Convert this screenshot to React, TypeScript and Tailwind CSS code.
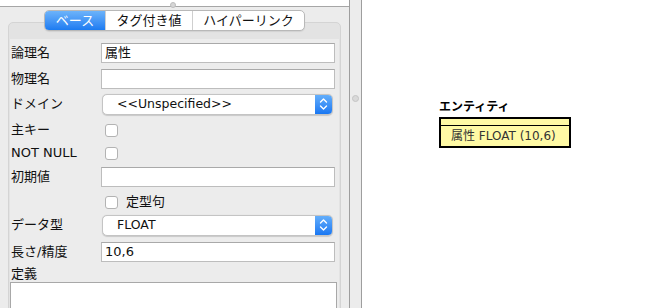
import React from "react";

const font = "font-['DejaVu_Sans','Noto_Sans_CJK_JP',sans-serif]";

function Stepper() {
  return (
    <div className="flex h-full w-[17px] items-center justify-center rounded-r-[4px] bg-gradient-to-b from-[#63aefb] to-[#1877f2]">
      <svg width="9" height="14" viewBox="0 0 9 14" fill="none">
        <path d="M1.5 5 L4.5 2 L7.5 5" stroke="white" strokeWidth="1.4" strokeLinecap="round" strokeLinejoin="round" />
        <path d="M1.5 9 L4.5 12 L7.5 9" stroke="white" strokeWidth="1.4" strokeLinecap="round" strokeLinejoin="round" />
      </svg>
    </div>
  );
}

function Select({ value }: { value: string }) {
  return (
    <div className="ml-[1px] flex h-[21px] w-[231px] items-center rounded-[5px] border border-[#c4c4c4] bg-white shadow-[0_0.5px_1px_rgba(0,0,0,0.15)]">
      <span className="flex-1 pl-[14px] text-[12.5px] text-[#111]">{value}</span>
      <Stepper />
    </div>
  );
}

function Input({ value = "" }: { value?: string }) {
  return (
    <div className="flex h-[20px] w-[234px] items-center border border-[#bdbdbd] border-t-[#a9a9a9] bg-white pl-[3px] text-[13px] text-[#111]">
      {value}
    </div>
  );
}

function Check() {
  return <div className="ml-[4px] h-[13px] w-[13px] rounded-[3px] border border-[#b3b3b3] bg-white" />;
}

function Row({ label, mt, children }: { label?: string; mt: string; children?: React.ReactNode }) {
  return (
    <div className={`flex h-[20px] items-center ${mt}`}>
      <div className="w-[91px] pl-[1px] text-[13px] text-[#111]">{label}</div>
      {children}
    </div>
  );
}

export default function App() {
  const tabs = ["ベース", "タグ付き値", "ハイパーリンク"];
  const widths = ["w-[60px]", "w-[87px]", "w-[112px]"];

  return (
    <div className={`flex h-[308px] w-[667px] overflow-hidden bg-white ${font}`}>
      {/* property panel */}
      <div className="relative flex w-[350px] flex-col border-r border-[#9e9e9e] bg-[#ececec]">
        <div className="h-[7px] shrink-0 border-b border-[#a6a6a6] bg-white" />
        <div className="absolute left-[170px] top-[2px] h-[6px] w-[6px] rounded-full border border-[#bdbdbd] bg-[#d6d6d6]" />

        <div className="flex flex-col px-[8px] pt-[3px]">
          <div className="relative z-10 -mb-[9px] flex justify-center">
            <div className="flex h-[21px] overflow-hidden rounded-[5px] border border-[#b8b8b8] bg-white text-[13px] shadow-[0_1px_1px_rgba(0,0,0,0.08)]">
              {tabs.map((t, i) => (
                <div
                  key={t}
                  className={`flex items-center justify-center ${widths[i]} ${
                    i === 0
                      ? "bg-gradient-to-b from-[#6cb3fa] to-[#1b7bf1] text-white"
                      : "border-l border-[#cfcfcf] text-[#111]"
                  }`}
                >
                  {t}
                </div>
              ))}
            </div>
          </div>

          <div className="h-[300px] rounded-[5px] border border-[#d4d4d4] bg-[#e3e3e3] px-[1px] pt-[16px]">
            <div className="h-full bg-[#ececec] pt-[4px]">
              <Row label="論理名" mt="mt-0">
                <Input value="属性" />
              </Row>
              <Row label="物理名" mt="mt-[6px]">
                <Input />
              </Row>
              <Row label="ドメイン" mt="mt-[5px]">
                <Select value="<<Unspecified>>" />
              </Row>
              <Row label="主キー" mt="mt-[6px]">
                <Check />
              </Row>
              <Row label="NOT NULL" mt="mt-[3px]">
                <Check />
              </Row>
              <Row label="初期値" mt="mt-[4px]">
                <Input />
              </Row>
              <Row mt="mt-[5px]">
                <Check />
                <span className="ml-[8px] text-[13px] text-[#111]">定型句</span>
              </Row>
              <Row label="データ型" mt="mt-[3px]">
                <Select value="FLOAT" />
              </Row>
              <Row label="長さ/精度" mt="mt-[7px]">
                <Input value="10,6" />
              </Row>
              <div className="mt-[4px] h-[16px] pl-[1px] text-[13px] leading-[16px] text-[#111]">定義</div>
              <div className="h-[60px] w-[327px] border border-[#a8a8a8] bg-white" />
            </div>
          </div>
        </div>
      </div>

      {/* splitter */}
      <div className="flex w-[12px] shrink-0 flex-col items-center border-r border-[#9e9e9e] bg-[#ececec]">
        <div className="mt-[95px] h-[7px] w-[7px] rounded-full border border-[#c4c4c4] bg-[#d9d9d9]" />
      </div>

      {/* diagram canvas */}
      <div className="relative flex-1 bg-white">
        <div className="absolute left-[77px] top-[100px]">
          <div className="text-[12px] font-bold leading-[15px] text-black">エンティティ</div>
          <div className="mt-[2px] w-[132px] border-2 border-black bg-[#fffaa5]">
            <div className="h-[7px] border-b border-black" />
            <div className="flex h-[20px] items-center pl-[10px] text-[12px] text-[#333]">属性 FLOAT (10,6)</div>
          </div>
        </div>
      </div>
    </div>
  );
}
